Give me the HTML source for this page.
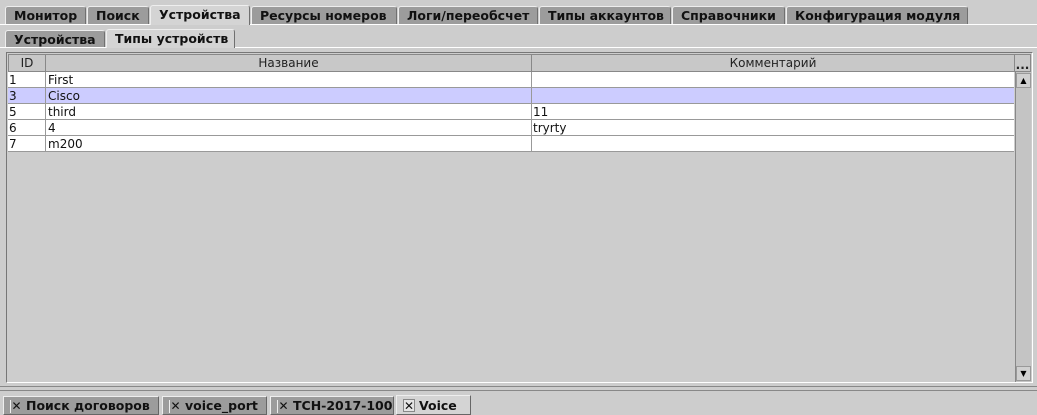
<!DOCTYPE html>
<html><head><meta charset="utf-8"><style>
*{margin:0;padding:0;box-sizing:border-box}
html,body{width:1037px;height:415px;overflow:hidden}
body{background:#cdcdcd;font-family:"DejaVu Sans","Liberation Sans",sans-serif;position:relative}
.t{position:absolute;font-weight:bold;font-size:12.5px;color:#111;background:#9c9c9c;border:1px solid #707070;border-bottom:none;border-top-color:#eee;border-left-color:#eee;padding-left:8px;line-height:17px;border-radius:3px 3px 0 0;white-space:nowrap;overflow:hidden}
.t.s{background:#d4d4d4}
.c{position:absolute;font-size:12px;color:#111;line-height:16px;white-space:nowrap}
.h{position:absolute;top:54px;height:18px;background:#c8c8c8;border:1px solid #888;font-size:12px;color:#222;text-align:center;line-height:16px}
.r{position:absolute;left:8px;width:1006px;height:16px;background:#fff;border-bottom:1px solid #999}
.v{position:absolute;top:72px;height:80px;border-left:1px solid #999}
.b{position:absolute;top:395px;height:20px;font-weight:bold;font-size:12.5px;color:#111;background:#9c9c9c;border:1px solid #666;border-top-color:#eee;border-left-color:#eee;line-height:18px;padding-left:6px;white-space:nowrap;overflow:hidden}
.b i{font-style:normal;display:inline-block;width:12px;height:13px;font-size:12px;line-height:13px;text-align:center;margin-right:4px;border-left:1px solid #eee}
</style></head><body>
<div style="position:absolute;left:0;top:24px;width:1037px;height:1px;background:#fff"></div>
<div class="t" style="left:5px;top:6px;width:81px;height:18px">Монитор</div>
<div class="t" style="left:87px;top:6px;width:62px;height:18px">Поиск</div>
<div class="t s" style="left:150px;top:5px;width:100px;height:20px">Устройства</div>
<div class="t" style="left:251px;top:6px;width:146px;height:18px">Ресурсы номеров</div>
<div class="t" style="left:398px;top:6px;width:140px;height:18px">Логи/переобсчет</div>
<div class="t" style="left:539px;top:6px;width:132px;height:18px">Типы аккаунтов</div>
<div class="t" style="left:672px;top:6px;width:113px;height:18px">Справочники</div>
<div class="t" style="left:786px;top:6px;width:182px;height:18px">Конфигурация модуля</div>
<div style="position:absolute;left:0;top:47px;width:1037px;height:1px;background:#fff"></div>
<div class="t" style="left:5px;top:30px;width:100px;height:17px">Устройства</div>
<div class="t s" style="left:106px;top:29px;width:129px;height:19px">Типы устройств</div>
<div style="position:absolute;left:6px;top:52px;width:1027px;height:331px;border:1px solid #777;border-right-color:#fff;border-bottom-color:#fff"></div>
<div class="h" style="left:8px;width:38px">ID</div>
<div class="h" style="left:45px;width:487px">Название</div>
<div class="h" style="left:531px;width:484px">Комментарий</div>
<div class="h" style="left:1014px;width:17px;font-weight:bold;line-height:20px">...</div>
<div class="r" style="top:72px"></div>
<div class="r" style="top:88px;background:#ccccff"></div>
<div class="r" style="top:104px"></div>
<div class="r" style="top:120px"></div>
<div class="r" style="top:136px"></div>
<div class="v" style="left:45px"></div><div class="v" style="left:531px"></div>
<div class="c" style="left:9px;top:72px">1</div><div class="c" style="left:48px;top:72px">First</div>
<div class="c" style="left:9px;top:88px">3</div><div class="c" style="left:48px;top:88px">Cisco</div>
<div class="c" style="left:9px;top:104px">5</div><div class="c" style="left:48px;top:104px">third</div><div class="c" style="left:533px;top:104px">11</div>
<div class="c" style="left:9px;top:120px">6</div><div class="c" style="left:48px;top:120px">4</div><div class="c" style="left:533px;top:120px">tryrty</div>
<div class="c" style="left:9px;top:136px">7</div><div class="c" style="left:48px;top:136px">m200</div>
<div style="position:absolute;left:1015px;top:72px;width:16px;height:310px;background:#c4c4c4;border-left:1px solid #888"></div>
<div style="position:absolute;left:1016px;top:73px;width:15px;height:15px;background:#d0d0d0;border:1px solid #999;font-size:8px;text-align:center;line-height:14px">▲</div>
<div style="position:absolute;left:1016px;top:366px;width:15px;height:15px;background:#d0d0d0;border:1px solid #999;font-size:8px;text-align:center;line-height:14px">▼</div>
<div style="position:absolute;left:0;top:386px;width:1037px;height:1px;background:#888"></div>
<div style="position:absolute;left:0;top:390px;width:1037px;height:1px;background:#888"></div>
<div class="b" style="left:3px;width:156px;top:396px;height:19px"><i>✕</i>Поиск договоров</div>
<div class="b" style="left:162px;width:105px;top:396px;height:19px"><i>✕</i>voice_port</div>
<div class="b" style="left:270px;width:124px;top:396px;height:19px"><i>✕</i>TCH-2017-100</div>
<div class="b" style="left:396px;width:75px;background:#d4d4d4;line-height:20px"><i style="background:#e4e4e4;border:1px solid #888">✕</i>Voice</div>
</body></html>
